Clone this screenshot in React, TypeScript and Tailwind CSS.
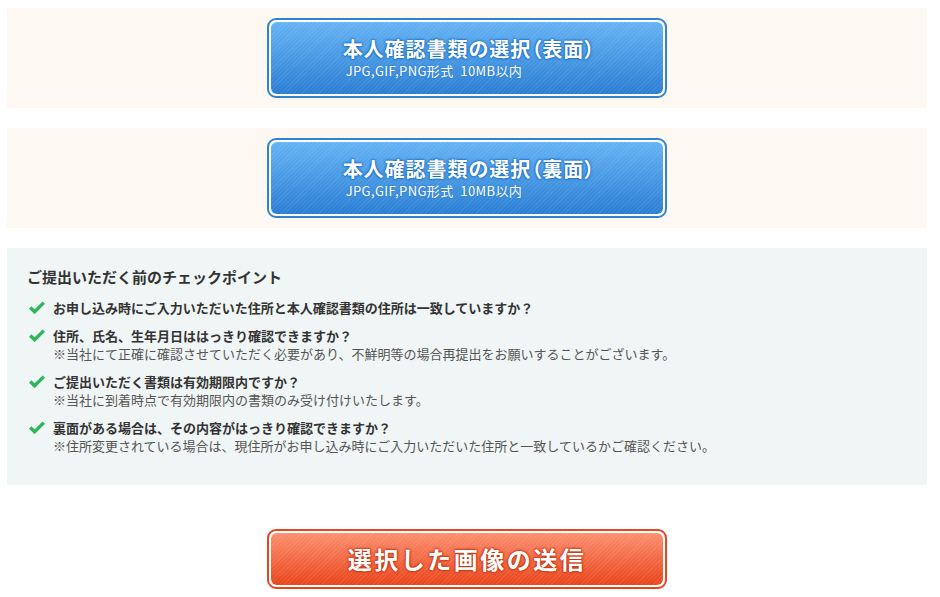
import type { ReactNode } from 'react';

const jp = 'font-["Noto_Sans_CJK_JP","Noto_Sans",sans-serif]';

function CheckIcon() {
  return (
    <svg viewBox="0 0 16 13" className="w-[16px] h-[13px] shrink-0 mt-[3px]">
      <path d="M1.2 6.6 L5.6 10.8 L14.8 1.6" fill="none" stroke="#2fb55c" strokeWidth="3.4" strokeLinecap="butt" strokeLinejoin="miter" />
    </svg>
  );
}

function BlueButton({ side }: { side: string }) {
  return (
    <button className="w-[400px] h-[80px] rounded-[9px] border-2 border-[#2d83d7] bg-white p-[2px] cursor-pointer">
      <div className="w-full h-full rounded-[6px] flex items-center justify-center bg-[image:repeating-linear-gradient(135deg,rgba(255,255,255,0.07)_0px,rgba(255,255,255,0.07)_1px,transparent_1px,transparent_3px),linear-gradient(to_bottom,#66b3f4,#2a7ed3)]">
        <div className="flex flex-col items-start text-white pl-[4px]">
          <span className="text-[20px] leading-[22px] font-bold tracking-[1px] [font-feature-settings:'palt'] [text-shadow:0_0_2px_#1e6fc2,0_0_2px_#1e6fc2,0_0_3px_#1e6fc2]">
            本人確認書類の選択（{side}）
          </span>
          <span className="text-[13px] leading-[16px] mt-[3px] ml-[3px] tracking-[0.4px] [text-shadow:0_0_2px_#2b78c8]">
            JPG,GIF,PNG形式&nbsp; 10MB以内
          </span>
        </div>
      </div>
    </button>
  );
}

function Item({ title, note }: { title: string; note?: ReactNode }) {
  return (
    <div className="flex gap-[8px]">
      <CheckIcon />
      <div className="flex flex-col">
        <span className="text-[13px] leading-[19px] font-bold text-[#333]">{title}</span>
        {note && <span className="text-[13px] leading-[18px] text-[#555]">{note}</span>}
      </div>
    </div>
  );
}

export default function App() {
  return (
    <div className={`w-[940px] min-h-[597px] bg-white pt-[8px] ${jp}`}>
      <div className="ml-[7px] w-[920px] h-[100px] bg-[#fef8f2] flex items-center justify-center">
        <BlueButton side="表面" />
      </div>
      <div className="ml-[7px] mt-[20px] w-[920px] h-[100px] bg-[#fef8f2] flex items-center justify-center">
        <BlueButton side="裏面" />
      </div>

      <div className="ml-[7px] mt-[20px] w-[920px] h-[237px] bg-[#f0f5f5] px-[20px] pt-[19px]">
        <h3 className="text-[15px] leading-[20px] font-bold text-[#333]">ご提出いただく前のチェックポイント</h3>
        <div className="mt-[11px] ml-[2px] flex flex-col gap-[9px]">
          <Item title="お申し込み時にご入力いただいた住所と本人確認書類の住所は一致していますか？" />
          <Item
            title="住所、氏名、生年月日ははっきり確認できますか？"
            note="※当社にて正確に確認させていただく必要があり、不鮮明等の場合再提出をお願いすることがございます。"
          />
          <Item
            title="ご提出いただく書類は有効期限内ですか？"
            note="※当社に到着時点で有効期限内の書類のみ受け付けいたします。"
          />
          <Item
            title="裏面がある場合は、その内容がはっきり確認できますか？"
            note="※住所変更されている場合は、現住所がお申し込み時にご入力いただいた住所と一致しているかご確認ください。"
          />
        </div>
      </div>

      <div className="mt-[44px] flex justify-center pr-[6px]">
        <button className="w-[400px] h-[60px] rounded-[9px] border-2 border-[#e5461c] bg-white p-[2px] cursor-pointer">
          <div className="w-full h-full rounded-[6px] flex items-center justify-center bg-[image:repeating-linear-gradient(135deg,rgba(255,255,255,0.08)_0px,rgba(255,255,255,0.08)_1px,transparent_1px,transparent_3px),linear-gradient(to_bottom,#fb9070,#e9441a)]">
            <span className="text-white text-[24px] leading-[30px] font-bold tracking-[2.5px] [text-shadow:0_0_2px_#c2320e,0_0_2px_#c2320e,0_0_3px_#c2320e]">
              選択した画像の送信
            </span>
          </div>
        </button>
      </div>
    </div>
  );
}
